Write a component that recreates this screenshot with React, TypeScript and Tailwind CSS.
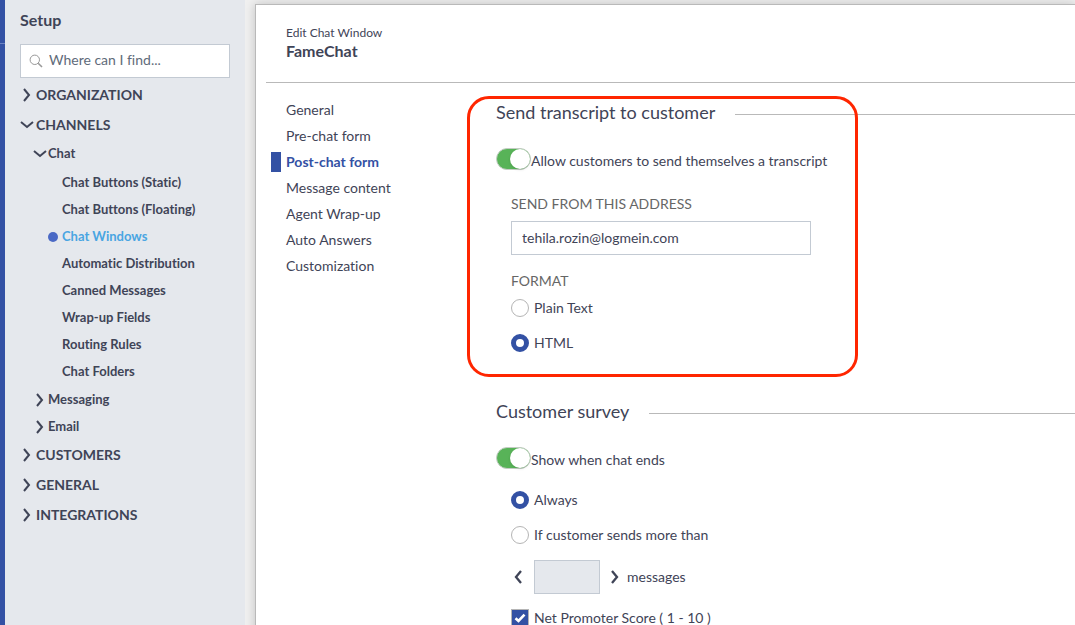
import { useState, type ReactNode } from "react";

type Direction = "left" | "right" | "down";

const chevronPaths: Record<Direction, string> = {
  right: "M4 1 L9 7 L4 13",
  left: "M9 1 L4 7 L9 13",
  down: "M1 4 L7 9 L13 4",
};

function Chevron({ direction, heavy = false }: { direction: Direction; heavy?: boolean }) {
  return (
    <svg
      viewBox="0 0 14 14"
      className="h-3.5 w-3.5 shrink-0"
      fill="none"
      stroke="currentColor"
      strokeWidth={heavy ? 2.3 : 2}
      aria-hidden="true"
    >
      <path d={chevronPaths[direction]} />
    </svg>
  );
}

function TreeToggle({ label, level, open = false }: { label: string; level: 1 | 2; open?: boolean }) {
  return (
    <button
      type="button"
      aria-expanded={open}
      className={
        level === 1
          ? "flex h-[30px] w-full items-center gap-0.5 pl-[15px] text-left text-sm font-bold"
          : "flex h-[27px] w-full items-center gap-px pl-7 text-left text-[13px] font-bold"
      }
    >
      <Chevron direction={open ? "down" : "right"} />
      {label}
    </button>
  );
}

const chatPages = [
  "Chat Buttons (Static)",
  "Chat Buttons (Floating)",
  "Chat Windows",
  "Automatic Distribution",
  "Canned Messages",
  "Wrap-up Fields",
  "Routing Rules",
  "Chat Folders",
];

function Sidebar() {
  return (
    <aside className="flex w-[245px] shrink-0 bg-[#e5e8ed]">
      <div className="w-[5px] shrink-0 bg-[#3351a4] pt-[43px]">
        <div className="h-px bg-[#6d83c2]" />
      </div>
      <div className="min-w-0 flex-1">
        <h2 className="px-[15px] pt-2 text-base leading-6 font-bold">Setup</h2>
        <div className="px-[15px] pt-3 pb-0.5">
          <label className="flex h-[34px] items-center gap-1.5 border border-[#c3cad3] bg-white pl-2">
            <svg viewBox="0 0 14 14" className="h-3.5 w-3.5 shrink-0" fill="none" stroke="#999" aria-hidden="true">
              <circle cx="5.8" cy="5.8" r="4.7" />
              <path d="M9.2 9.2 L13 13" strokeWidth="1.6" />
            </svg>
            <input
              type="search"
              aria-label="Search setup"
              placeholder="Where can I find..."
              className="w-full min-w-0 bg-transparent pb-0.5 text-sm outline-none placeholder:text-[#5f6b7a]"
            />
          </label>
        </div>
        <nav>
          <TreeToggle label="ORGANIZATION" level={1} />
          <TreeToggle label="CHANNELS" level={1} open />
          <TreeToggle label="Chat" level={2} open />
          <ul className="pt-0.5 pb-px">
            {chatPages.map((page) => {
              const current = page === "Chat Windows";
              return (
                <li key={page}>
                  <a
                    href="#"
                    aria-current={current ? "page" : undefined}
                    className={
                      current
                        ? "flex h-[27px] items-center gap-1 pl-[43px] text-[13px] font-bold text-[#49a5e2]"
                        : "flex h-[27px] items-center pl-[57px] text-[13px] font-bold"
                    }
                  >
                    {current && <span className="h-2.5 w-2.5 rounded-full bg-[#4a69c5]" />}
                    {page}
                  </a>
                </li>
              );
            })}
          </ul>
          <TreeToggle label="Messaging" level={2} />
          <TreeToggle label="Email" level={2} />
          <TreeToggle label="CUSTOMERS" level={1} />
          <TreeToggle label="GENERAL" level={1} />
          <TreeToggle label="INTEGRATIONS" level={1} />
        </nav>
      </div>
    </aside>
  );
}

const tabs = [
  "General",
  "Pre-chat form",
  "Post-chat form",
  "Message content",
  "Agent Wrap-up",
  "Auto Answers",
  "Customization",
];

function SectionTitle({ children }: { children: ReactNode }) {
  return (
    <div className="flex items-center gap-5">
      <h3 className="text-lg leading-7">{children}</h3>
      <div className="mt-1 h-px flex-1 bg-[#b9b9b9]" />
    </div>
  );
}

function Toggle({ label }: { label: string }) {
  const [on, setOn] = useState(true);
  return (
    <label className="flex h-6 items-center">
      <input
        type="checkbox"
        role="switch"
        checked={on}
        onChange={() => setOn(!on)}
        className="flex h-[22px] w-[35px] shrink-0 appearance-none items-center rounded-full border border-[#c4cdc4] bg-[#d5d9df] before:h-5 before:w-5 before:rounded-full before:bg-white before:shadow before:content-[''] checked:justify-end checked:bg-[#58b358]"
      />
      <span className="pt-1">{label}</span>
    </label>
  );
}

function Radio({ name, label, defaultChecked }: { name: string; label: string; defaultChecked?: boolean }) {
  return (
    <label className="flex h-[35px] items-center gap-[5px]">
      <input
        type="radio"
        name={name}
        defaultChecked={defaultChecked}
        className="h-[18px] w-[18px] shrink-0 appearance-none rounded-full border border-[#b5b5b5] bg-white checked:border-[5px] checked:border-[#3351a4]"
      />
      {label}
    </label>
  );
}

export default function App() {
  return (
    <div className="flex h-screen overflow-hidden bg-[#f0f0f0] font-['Lato',sans-serif] text-sm text-[#3f4457] [font-variant-ligatures:none]">
      <Sidebar />
      <div className="min-w-0 flex-1 overflow-hidden pt-1 pl-2.5">
        <main className="min-h-screen border-t border-l border-[#b9b9b9] bg-white shadow-[0_0_10px_rgba(0,0,0,0.2)]">
          <header className="ml-2.5 border-b border-[#b9b9b9] pt-5 pb-[21px] pl-5">
            <p className="text-xs leading-4">Edit Chat Window</p>
            <h1 className="text-base leading-5 font-bold">FameChat</h1>
          </header>
          <div className="flex">
            <nav className="w-[240px] shrink-0 pt-3.5">
              {tabs.map((tab) =>
                tab === "Post-chat form" ? (
                  <a
                    key={tab}
                    href="#"
                    aria-current="page"
                    className="flex h-[26px] items-center gap-[5px] pl-[15px] font-bold text-[#3351a4]"
                  >
                    <span className="h-5 w-2.5 bg-[#3351a4]" />
                    {tab}
                  </a>
                ) : (
                  <a key={tab} href="#" className="flex h-[26px] items-center pl-[30px]">
                    {tab}
                  </a>
                ),
              )}
            </nav>
            <div className="min-w-0 flex-1">
              <section className="relative pt-[15px] pb-[37px]">
                <SectionTitle>Send transcript to customer</SectionTitle>
                <div className="pt-[21px]">
                  <Toggle label="Allow customers to send themselves a transcript" />
                </div>
                <div className="pt-[23px] pl-[15px]">
                  <label htmlFor="sender" className="block leading-5 text-[#666]">
                    SEND FROM THIS ADDRESS
                  </label>
                  <input
                    id="sender"
                    type="email"
                    defaultValue="tehila.rozin@logmein.com"
                    className="mt-[7px] block h-[34px] w-[300px] border border-[#c3cad3] bg-white px-2.5 pb-0.5 outline-none"
                  />
                  <fieldset className="mt-4">
                    <legend className="leading-5 text-[#666]">FORMAT</legend>
                    <div className="-mt-px">
                      <Radio name="format" label="Plain Text" />
                      <Radio name="format" label="HTML" defaultChecked />
                    </div>
                  </fieldset>
                </div>
                <div className="pointer-events-none absolute top-[13px] bottom-5 -left-[29px] w-[391px] rounded-[22px] border-3 border-[#ff2600]" />
              </section>
              <section>
                <SectionTitle>Customer survey</SectionTitle>
                <div className="pt-[21px]">
                  <Toggle label="Show when chat ends" />
                </div>
                <div className="pt-3 pl-[15px]">
                  <Radio name="survey" label="Always" defaultChecked />
                  <Radio name="survey" label="If customer sends more than" />
                  <div className="flex items-center pt-2">
                    <button type="button" aria-label="Fewer messages" className="flex w-[23px] pl-px">
                      <Chevron direction="left" heavy />
                    </button>
                    <input
                      type="text"
                      aria-label="Message count"
                      className="h-[34px] w-[66px] border border-[#c3cad3] bg-[#e5e8ed] px-2 outline-none"
                    />
                    <button type="button" aria-label="More messages" className="flex w-[27px] pl-2">
                      <Chevron direction="right" heavy />
                    </button>
                    messages
                  </div>
                  <label className="flex h-12 items-center gap-[5px]">
                    <span className="grid shrink-0">
                      <input
                        type="checkbox"
                        defaultChecked
                        className="peer col-start-1 row-start-1 h-[18px] w-[18px] appearance-none border border-[#b5b5b5] bg-white checked:bg-[#3351a4]"
                      />
                      <svg
                        viewBox="0 0 18 18"
                        className="pointer-events-none invisible col-start-1 row-start-1 h-[18px] w-[18px] peer-checked:visible"
                        fill="none"
                        stroke="white"
                        strokeWidth="2.6"
                        aria-hidden="true"
                      >
                        <path d="M4.5 9.2 L7.5 12 L13.5 5.6" />
                      </svg>
                    </span>
                    Net Promoter Score ( 1 - 10 )
                  </label>
                </div>
              </section>
            </div>
          </div>
        </main>
      </div>
    </div>
  );
}
